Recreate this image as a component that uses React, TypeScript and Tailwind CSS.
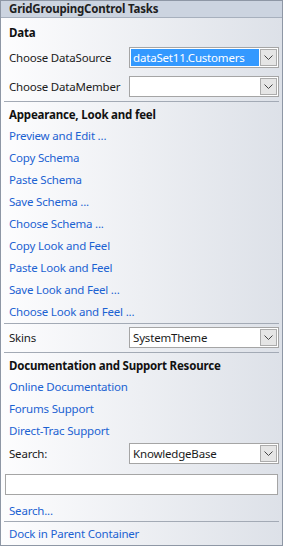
const font = { fontFamily: '"Noto Sans", "Open Sans", sans-serif' };

const links1 = [
  "Preview and Edit ...",
  "Copy Schema",
  "Paste Schema",
  "Save Schema ...",
  "Choose Schema ...",
  "Copy Look and Feel",
  "Paste Look and Feel",
  "Save Look and Feel ...",
  "Choose Look and Feel ...",
];

const links2 = ["Online Documentation", "Forums Support", "Direct-Trac Support"];

const Chevron = () => (
  <svg width="9" height="5" viewBox="0 0 9 5" fill="none">
    <path d="M0.5 0.5 L4.5 4.5 L8.5 0.5" stroke="#444" strokeWidth="1" />
  </svg>
);

const Combo = ({ value, selected }: { value: string; selected?: boolean }) => (
  <div className="flex h-[21px] w-[151px] items-stretch border border-[#a5a5a5] bg-white p-[1px]">
    <div
      className={
        "flex flex-1 items-center pl-[2px] " +
        (selected ? "bg-[#3399ff] text-white" : "text-[#1b1b1b]")
      }
    >
      {value}
    </div>
    <div className="ml-[1px] flex w-[17px] items-center justify-center border border-[#acacac] bg-[#e5e5e5]">
      <Chevron />
    </div>
  </div>
);

const Separator = () => <div className="mx-[3px] h-px shrink-0 bg-[#a3aab5]" />;

const Gap = ({ h }: { h: string }) => <div className={"shrink-0 " + h} />;

const FieldRow = ({ label, value, selected }: { label: string; value: string; selected?: boolean }) => (
  <div className="flex h-[21px] shrink-0 items-center pl-[8px] pr-[3px]">
    <span className="w-[121px] text-[#1b1b1b]">{label}</span>
    <Combo value={value} selected={selected} />
  </div>
);

const Heading = ({ children, h }: { children: string; h: string }) => (
  <div className={"flex shrink-0 items-center pl-[8px] font-bold text-[#111] " + h}>{children}</div>
);

const Link = ({ children, h = "h-[22px]" }: { children: string; h?: string }) => (
  <div className={"flex shrink-0 items-center pl-[8px] text-[#1c62d2] " + h}>{children}</div>
);

export default function App() {
  return (
    <div className="h-[546px] w-[283px] bg-white text-[11.5px] tracking-[-0.2px]" style={font}>
      <div className="flex h-full flex-col border border-[#8e97a5] bg-gradient-to-r from-[#fdfdfe] to-[#dde1e8]">
        <div className="flex h-[17px] shrink-0 items-center border-b border-[#a7b0bd] bg-[#ccd4e0] pl-[8px] font-bold text-[#1e1e1e]">
          GridGroupingControl Tasks
        </div>
        <Heading h="h-[29px]">Data</Heading>
        <FieldRow label="Choose DataSource" value="dataSet11.Customers" selected />
        <Gap h="h-[8px]" />
        <FieldRow label="Choose DataMember" value="" />
        <Gap h="h-[4px]" />
        <Separator />
        <Gap h="h-[2px]" />
        <Heading h="h-[21px]">Appearance, Look and feel</Heading>
        {links1.map((l) => (
          <Link key={l}>{l}</Link>
        ))}
        <Separator />
        <Gap h="h-[3px]" />
        <FieldRow label="Skins" value="SystemTheme" />
        <Gap h="h-[4px]" />
        <Separator />
        <Gap h="h-[2px]" />
        <Heading h="h-[21px]">Documentation and Support Resource</Heading>
        {links2.map((l) => (
          <Link key={l}>{l}</Link>
        ))}
        <Gap h="h-[1px]" />
        <FieldRow label="Search:" value="KnowledgeBase" />
        <Gap h="h-[10px]" />
        <div className="mx-[4px] h-[21px] shrink-0 border border-[#a5a5a5] bg-white" />
        <Gap h="h-[5px]" />
        <Link h="h-[21px]">Search...</Link>
        <Separator />
        <Link h="h-[23px]">Dock in Parent Container</Link>
      </div>
    </div>
  );
}
